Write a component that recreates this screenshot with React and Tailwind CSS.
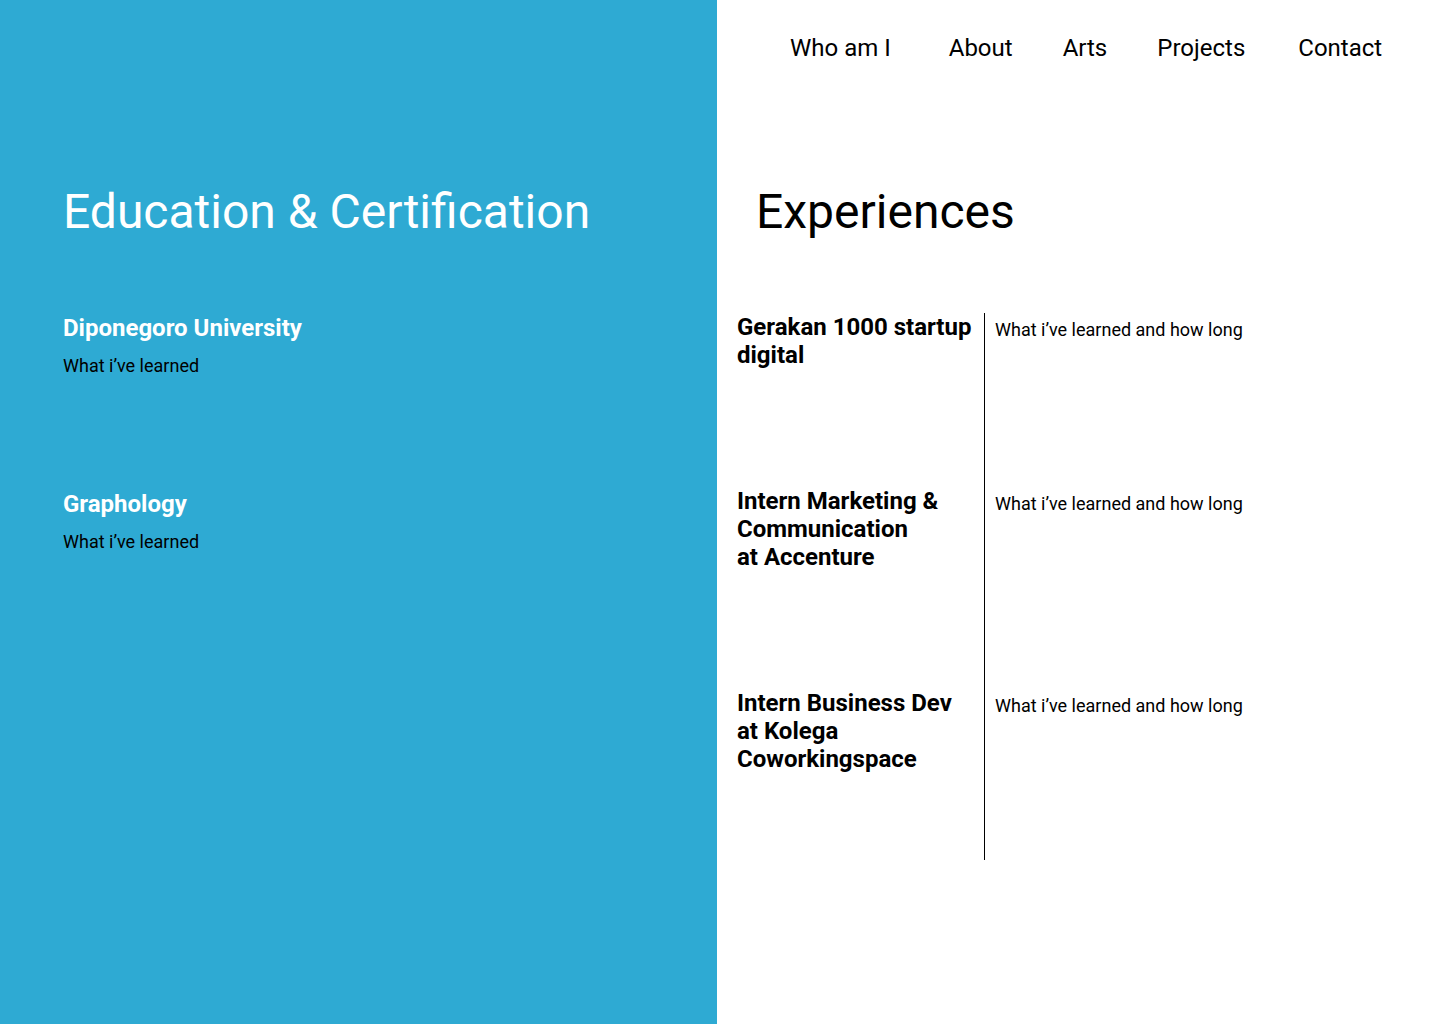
import React from "react";

const navLinks = ["Who am I", "About", "Arts", "Projects", "Contact"];

const education = [
  { title: "Diponegoro University", note: "What i’ve learned" },
  { title: "Graphology", note: "What i’ve learned" },
];

const experiences = [
  { title: ["Gerakan 1000 startup", "digital"], pad: "pb-[118px]" },
  { title: ["Intern Marketing &", "Communication", "at Accenture"], pad: "pb-[118px]" },
  { title: ["Intern Business Dev", "at Kolega", "Coworkingspace"], pad: "pb-[87px]" },
];

const App = () => {
  return (
    <div className="flex w-[1440px] h-[1024px] overflow-hidden font-['Roboto',sans-serif] text-black">
      <section className="w-[717px] h-full bg-[#2eaad3] pl-[63px] pt-[184px]">
        <h1 className="text-[48px] leading-[56px] text-white">
          Education &amp; Certification
        </h1>
        <div className="mt-[74px] flex flex-col gap-[114px]">
          {education.map((e) => (
            <div key={e.title}>
              <h3 className="text-[24px] leading-[28px] font-bold text-white">
                {e.title}
              </h3>
              <p className="mt-[14px] text-[18px] leading-[20px]">{e.note}</p>
            </div>
          ))}
        </div>
      </section>

      <section className="flex-1 bg-white">
        <nav className="flex items-center h-[96px] pl-[73px] text-[24px]">
          {navLinks.map((l, i) => (
            <a
              key={l}
              href="#"
              className={
                i === 0
                  ? "mr-[58px]"
                  : i === 1
                  ? "mr-[50px]"
                  : i === 2
                  ? "mr-[50px]"
                  : i === 3
                  ? "mr-[53px]"
                  : ""
              }
            >
              {l}
            </a>
          ))}
        </nav>

        <h2 className="mt-[88px] ml-[39px] text-[48px] leading-[56px]">Experiences</h2>

        <div className="mt-[73px] ml-[20px]">
          {experiences.map((x, i) => (
            <div key={i} className="flex">
              <div className={`w-[247px] ${x.pad}`}>
                <h3 className="text-[24px] leading-[28px] font-bold">
                  {x.title.map((t) => (
                    <span key={t} className="block">
                      {t}
                    </span>
                  ))}
                </h3>
              </div>
              <div className="border-l border-black pl-[10px] pt-[5px]">
                <p className="text-[18px] leading-[24px]">What i’ve learned and how long</p>
              </div>
            </div>
          ))}
        </div>
      </section>
    </div>
  );
};

export default App;
